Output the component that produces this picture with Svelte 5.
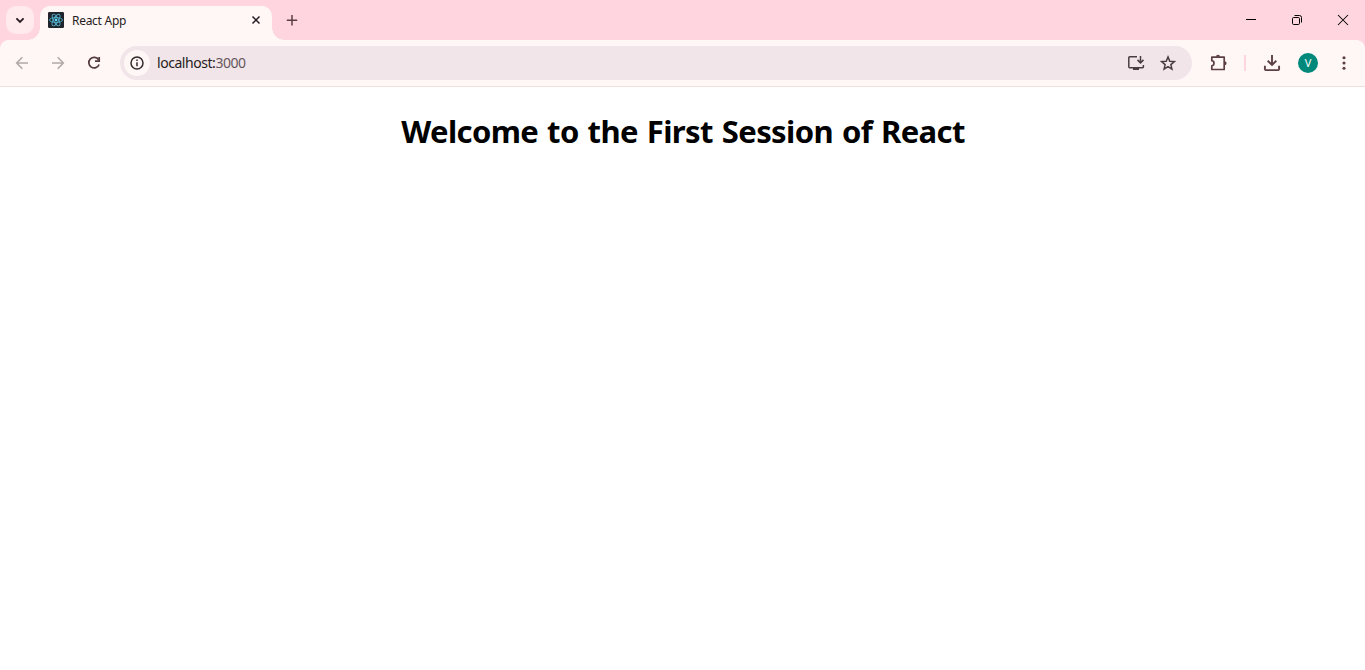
<script>
  const heading = 'Welcome to the First Session of React';
</script>

<div class="window">
  <header class="tabstrip">
    <button class="search" aria-label="Search tabs">
      <svg width="28" height="28" viewBox="0 0 28 28"><path d="M10.4 12.4 14 16l3.6-3.6" fill="none" stroke="#271c20" stroke-width="1.8" /></svg>
    </button>
    <div class="tab">
      <svg class="favicon" width="16" height="16" viewBox="0 0 16 16">
        <rect width="16" height="16" rx="1.2" fill="#20232a" />
        <g fill="none" stroke="#4fb3cf" stroke-width=".9">
          <ellipse cx="8" cy="8" rx="6.5" ry="2.5" />
          <ellipse cx="8" cy="8" rx="6.5" ry="2.5" transform="rotate(60 8 8)" />
          <ellipse cx="8" cy="8" rx="6.5" ry="2.5" transform="rotate(120 8 8)" />
        </g>
        <circle cx="8" cy="8" r="1.4" fill="#61dafb" />
      </svg>
      <span class="title">React App</span>
      <svg class="close" width="16" height="16" viewBox="0 0 16 16"><path d="m4.5 4.5 7 7m0-7-7 7" stroke="#271c20" stroke-width="1.5" /></svg>
    </div>
    <button class="new" aria-label="New tab">
      <svg width="28" height="28" viewBox="0 0 28 28"><path d="M14 9v10.5M8.8 14.2h10.4" stroke="#5c3f45" stroke-width="1.5" /></svg>
    </button>
    <div class="controls">
      <svg width="46" height="40" viewBox="0 0 46 40"><path d="M18 19.5h10" stroke="#000" /></svg>
      <svg width="46" height="40" viewBox="0 0 46 40" fill="none" stroke="#000"><rect x="18.5" y="17.5" width="7" height="7" rx="1.2" /><path d="M20.5 15.5h5a2 2 0 0 1 2 2v5" /></svg>
      <svg width="46" height="40" viewBox="0 0 46 40"><path d="m18 15 10 10m0-10L18 25" stroke="#000" stroke-width="1.05" /></svg>
    </div>
  </header>

  <nav class="toolbar">
    <div class="nav">
      <svg width="36" height="36" viewBox="0 0 36 36" fill="none" stroke="#b2a8a9" stroke-width="1.6"><path d="M24 18H13m5.3-5.7L12.7 18l5.6 5.7" /></svg>
      <svg width="36" height="36" viewBox="0 0 36 36" fill="none" stroke="#b2a8a9" stroke-width="1.6"><path d="M12 18h11m-5.3-5.7 5.6 5.7-5.6 5.7" /></svg>
      <svg width="36" height="36" viewBox="0 0 36 36" fill="none" stroke="#523a3f" stroke-width="1.7"><path d="M22.6 14.8a5.3 5.3 0 1 0 .5 4.7" /><path d="M23.2 12v4.2H19" /></svg>
    </div>
    <div class="omnibox">
      <span class="info">
        <svg width="26" height="26" viewBox="0 0 26 26"><circle cx="13" cy="13" r="6" fill="none" stroke="#34282c" stroke-width="1.5" /><path d="M13 12.3v4M13 9.4v1.5" stroke="#34282c" stroke-width="1.5" /></svg>
      </span>
      <span class="url">localhost:<span class="port">3000</span></span>
      <svg class="install" width="20" height="20" viewBox="0 0 20 20" fill="none" stroke="#4b3c42" stroke-width="1.5"><path d="M11 3.8H3.7a.9.9 0 0 0-.9.9v9.1c0 .5.4.9.9.9h12.8a.9.9 0 0 0 .9-.9V12" /><path d="M14.5 3v6.7m-3-2.8 3 3 3-3" /><path d="M7 16h6" stroke-width="2" /></svg>
      <svg class="star" width="20" height="20" viewBox="0 0 20 20"><path d="m10 3.9 1.75 4.3 4.65.38-3.55 3.02 1.1 4.55L10 13.7l-3.95 2.45 1.1-4.55L3.6 8.58l4.65-.38z" fill="none" stroke="#4b3c42" stroke-width="1.5" /></svg>
    </div>
    <div class="actions">
      <svg class="puzzle" width="20" height="20" viewBox="0 0 20 20"><path d="M3.8 4.1h12.4v12.4H3.8v-3.6c1.3-.2 2.2-1.2 2.2-2.6S5.100 7.900 3.8 7.700z" fill="none" stroke="#5c3f45" stroke-width="1.7" stroke-linejoin="round" /><path d="M8 3.8a2 2 0 0 1 4 0zM16.6 8.300a2 2 0 0 1 0 4z" fill="#5c3f45" /></svg>
      <span class="divider"></span>
      <svg class="download" width="20" height="20" viewBox="0 0 20 20" fill="none" stroke="#5c3f45" stroke-width="1.9"><path d="M10 2v9.5M5.7 7.7l4.3 4.2 4.3-4.2" /><path d="M2.9 12.8v3.3c0 .6.4 1 1 1h12.2c.6 0 1-.4 1-1v-3.3" /></svg>
      <span class="avatar">V</span>
      <svg class="menu" width="20" height="20" viewBox="0 0 20 20" fill="#5c3f45"><circle cx="10" cy="4.8" r="1.55" /><circle cx="10" cy="10" r="1.55" /><circle cx="10" cy="15.2" r="1.55" /></svg>
    </div>
  </nav>

  <main><h1>{heading}</h1></main>
</div>

<style>
  :global(body) { margin: 0; background: #fff; }
  .window { height: 670px; overflow: hidden; background: #fff; font-family: "Noto Sans", sans-serif; }
  svg { display: block; flex: none; }
  button { border: 0; padding: 0; background: none; width: 28px; height: 28px; flex: none; }
  .tabstrip { height: 40px; display: flex; background: #ffd6df; }
  .search { margin: 6px 6px 0; border-radius: 10px; background: #ffebee; }
  .tab { position: relative; box-sizing: border-box; width: 232px; height: 34px; margin-top: 6px; padding: 0 8px 6px; display: flex; align-items: center; background: #fff7f6; border-radius: 10px 10px 0 0; }
  .tab::before, .tab::after { content: ""; position: absolute; bottom: 0; width: 12px; height: 12px; }
  .tab::before { left: -12px; background: radial-gradient(circle at 0 0, transparent 11.5px, #fff7f6 12px); }
  .tab::after { right: -12px; background: radial-gradient(circle at 100% 0, transparent 11.5px, #fff7f6 12px); }
  .title { margin-left: 8px; flex: 1; font-size: 12px; line-height: 16px; letter-spacing: -.28px; color: #271c20; position: relative; top: 1px; }
  .new { margin: 6px 0 0 6px; }
  .controls { margin-left: auto; margin-right: -1px; display: flex; }
  .toolbar { box-sizing: border-box; height: 47px; display: flex; align-items: center; border-bottom: 1px solid #f3dde0; background: #fff7f6; position: relative; }
  .toolbar::before, .toolbar::after { content: ""; position: absolute; top: 0; width: 8px; height: 8px; }
  .toolbar::before { left: 0; background: radial-gradient(circle at 100% 100%, transparent 7.5px, #ffd6df 8px); }
  .toolbar::after { right: 0; background: radial-gradient(circle at 0 100%, transparent 7.5px, #ffd6df 8px); }
  .nav { display: flex; margin-left: 4px; }
  .omnibox { box-sizing: border-box; margin-left: 8px; width: 1072px; height: 34px; border-radius: 17px; padding: 0 14px 0 4px; display: flex; align-items: center; background: #f1e5e9; }
  .info { border-radius: 50%; background: #fff7f6; }
  .url { margin-left: 7px; flex: 1; font-size: 14px; line-height: 20px; letter-spacing: -.45px; color: #271c20; }
  .port { color: #65575c; }
  .star { margin-left: 12px; }
  .actions { display: flex; align-items: center; margin-left: 16px; }
  .divider { width: 2px; height: 16px; margin: 0 16px; background: #ffd6df; }
  .avatar { width: 20px; height: 20px; margin: 0 16px; border-radius: 50%; background: #00897b; color: #fff; font-size: 11px; line-height: 20px; text-align: center; }
  h1 { margin: 23px 0 0; padding-left: 1px; text-align: center; font-size: 31px; line-height: 43px; font-weight: 700; letter-spacing: -.62px; word-spacing: 1.5px; color: #000; white-space: nowrap; }
</style>
